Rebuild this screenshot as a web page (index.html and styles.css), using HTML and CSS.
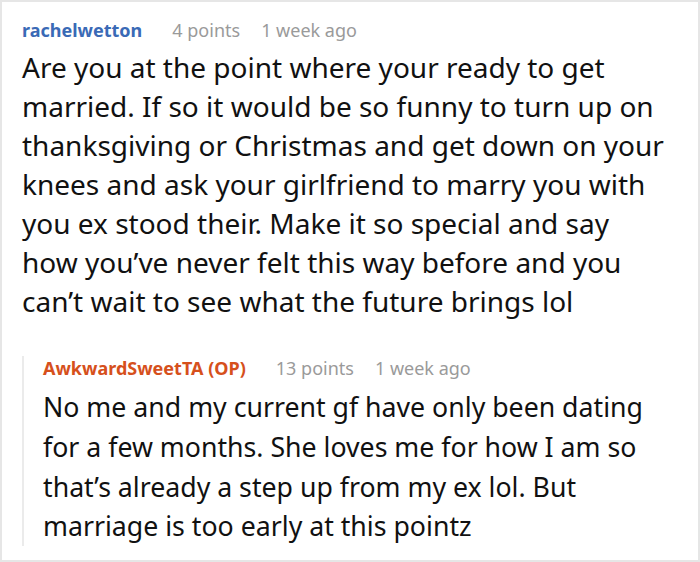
FILE: index.html
```html
<!DOCTYPE html>
<html>
<head>
<meta charset="utf-8">
<link rel="stylesheet" href="styles.css">
</head>
<body>
<div class="card">
  <div class="comment">
    <div class="meta">
      <span class="author">rachelwetton</span>
      <span class="info">4 points</span>
      <span class="info">1 week ago</span>
    </div>
    <p class="text">Are you at the point where your ready to get married. If so it would be so funny to turn up on thanksgiving or Christmas and get down on your knees and ask your girlfriend to marry you with you ex stood their. Make it so special and say how you’ve never felt this way before and you can’t wait to see what the future brings lol</p>
    <div class="reply">
      <div class="meta">
        <span class="author op">AwkwardSweetTA (OP)</span>
        <span class="info">13 points</span>
        <span class="info">1 week ago</span>
      </div>
      <p class="text">No me and my current gf have only been dating for a few months. She loves me for how I am so that’s already a step up from my ex lol. But marriage is too early at this pointz</p>
    </div>
  </div>
</div>
</body>
</html>
```

FILE: styles.css
```css
html, body {
  margin: 0;
  padding: 0;
  background: #fff;
}
.card {
  box-sizing: border-box;
  width: 700px;
  height: 562px;
  border: 2px solid #e6e6e6;
  padding: 16px 20px 0 20px;
  font-family: "Noto Sans", "Open Sans", sans-serif;
  overflow: hidden;
}
.meta {
  display: flex;
  gap: 21px;
  font-size: 18px;
  line-height: 24px;
  margin-bottom: 6px;
}
.author {
  font-weight: bold;
  color: #3a6ab6;
  margin-right: 9px;
}
.author.op {
  color: #d6501c;
}
.info {
  color: #9a9a9a;
}
.text {
  margin: 0;
  padding-right: 10px;
  font-size: 28px;
  line-height: 39px;
  color: #111;
}
.reply {
  margin-top: 46px;
  border-left: 2px solid #ebebeb;
  padding: 0 0 0 19px;
}
.reply .meta {
  margin-top: -11px;
  margin-bottom: 7px;
}
.reply .text {
  padding-right: 0;
  font-size: 26.7px;
  line-height: 39.8px;
}
```
